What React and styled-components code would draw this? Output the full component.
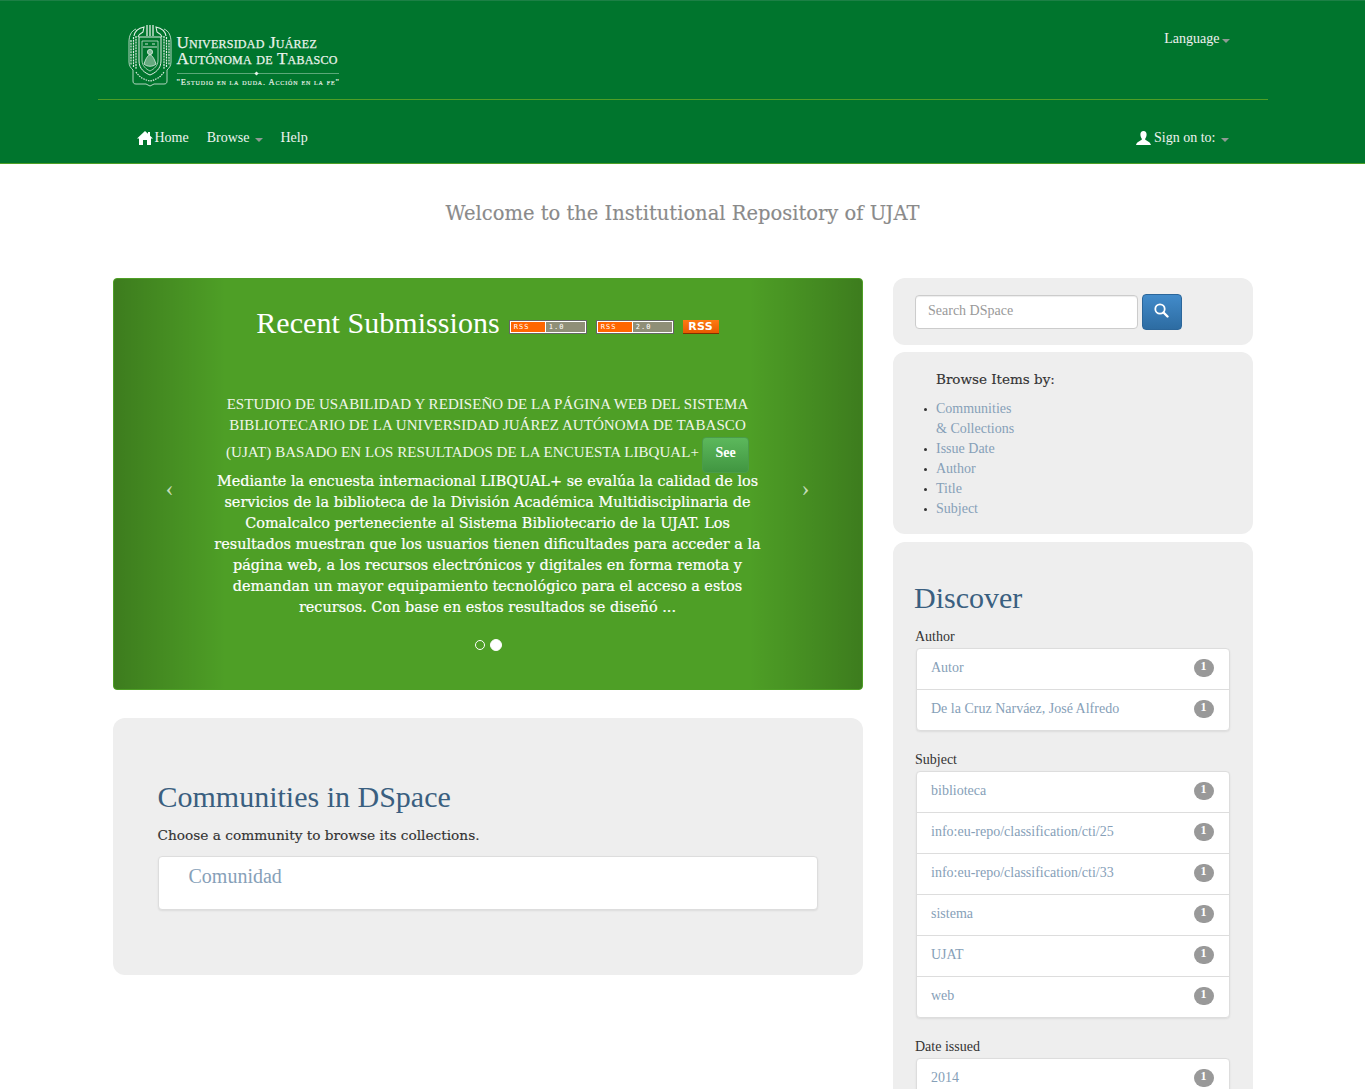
import React from "react";
import styled, { createGlobalStyle } from "styled-components";

const Global = createGlobalStyle`
  html, body { margin: 0; padding: 0; background: #fff; }
  body { font-family: "Liberation Serif", "Times New Roman", serif; font-size: 14px; line-height: 20px; color: #333; }
  * { box-sizing: border-box; }
`;
const slab = `"DejaVu Serif", serif`;

const Page = styled.div`height: 1089px; overflow: hidden;`;
const Header = styled.header`
  height: 164px; background: #00752d; border-top: 1px solid #1c8045; border-bottom: 1px solid #4e9f26;
`;
const HeaderInner = styled.div`width: 1170px; margin: 0 auto;`;
const TopRow = styled.div`
  height: 99px; padding: 24px 39px 0 30px; border-bottom: 1px solid #4e9f26;
  display: flex; justify-content: space-between; align-items: flex-start;
`;
const Logo = styled.div`display: flex; gap: 5px; align-items: flex-start; color: #eaf3ec;`;
const LogoText = styled.div`display: flex; flex-direction: column; padding-top: 10px; width: 162px;`;
const LogoLine = styled.div`
  font-family: "Liberation Serif", serif; font-variant: small-caps; font-size: 17px; line-height: 16px;
  letter-spacing: .22px; white-space: nowrap; font-weight: 400; -webkit-text-stroke: .25px #eaf3ec;
`;
const LogoRule = styled.div`
  height: 1px; background: #5aa878; margin: 6px 0 4px; position: relative;
  &::after { content: ""; position: absolute; left: 78px; top: -1px; width: 3px; height: 3px; background: #eaf3ec; transform: rotate(45deg); }
`;
const LogoTag = styled.div`
  font-family: "Liberation Serif", serif; font-variant: small-caps; font-size: 8.500px; line-height: 8px;
  letter-spacing: .85px; white-space: nowrap; font-weight: 400; -webkit-text-stroke: .15px #eaf3ec;
`;
const Language = styled.div`color: #f0f0f0; margin-top: 4px; margin-right: -1px; display: flex; align-items: center; gap: 2px;`;
const Caret = styled.span`
  display: inline-block; width: 0; height: 0; border-top: 4px solid #8f9a94;
  border-left: 4px solid transparent; border-right: 4px solid transparent; margin-top: 3px;
`;
const NavRow = styled.nav`
  height: 63px; padding: 13px 39px 0; display: flex; justify-content: space-between; align-items: center;
`;
const NavGroup = styled.div`display: flex; gap: 18px; align-items: center;`;
const NavItem = styled.a`color: #eef3ef; display: flex; align-items: center; gap: ${p => p.$gap || 2}px; white-space: nowrap;`;
const SignCaret = styled(Caret)`margin-left: 2px;`;

const Welcome = styled.h3`
  margin: 0; padding-top: 37px; height: 114px; text-align: center; font: 400 19.500px/26px ${slab}; color: #8a8a8a;
  -webkit-text-stroke: .15px #8a8a8a;
`;
const Main = styled.main`width: 1140px; margin: 0 auto; display: flex; gap: 30px; align-items: flex-start;`;
const LeftCol = styled.div`width: 750px; display: flex; flex-direction: column; gap: 28px;`;
const RightCol = styled.div`width: 360px; display: flex; flex-direction: column; gap: 7px;`;

const Carousel = styled.section`
  position: relative; height: 412px; background: #4e9f26; border: 1px solid #4e9f26; border-radius: 4px;
  color: #fff; overflow: hidden; text-align: center;
`;
const Control = styled.div`
  position: absolute; top: 0; bottom: 0; width: 15%; ${p => p.$side}: 0; display: flex; align-items: center; justify-content: center;
  padding-top: 8px; background: linear-gradient(to ${p => p.$side === "left" ? "right" : "left"}, rgba(0,0,0,.22), rgba(0,0,0,.0));
  font-size: 24px; color: #c4dcb8;
`;
const CarouselHead = styled.div`
  height: 87px; padding: 27px 0 0; display: flex; justify-content: center; align-items: flex-start; gap: 9px;
`;
const CarouselTitle = styled.h3`margin: 0; font: 400 30px/33px "Liberation Serif", serif; color: #fff; letter-spacing: .05px;`;
const Badge = styled.span`
  display: flex; width: 78px; height: 14px; margin-top: 14px; border: 1px solid #666; background: #fff;
  font: 400 7px/10px "DejaVu Sans Mono", monospace; letter-spacing: 1.100px; color: #fff; padding: 1px;
`;
const BadgeLeft = styled.span`width: 34px; background: #ff6600; text-align: left; padding-left: 3px;`;
const BadgeRight = styled.span`flex: 1; background: #8f8f77; border-left: 1px solid #fff; text-align: left; padding-left: 3px;`;
const RssBadge = styled.span`
  width: 36px; height: 14px; margin-top: 14px; background: linear-gradient(#ff7a12, #e85a00); border-bottom: 1px solid #803000;
  font: 700 11px/13px "DejaVu Sans", sans-serif; color: #fff; letter-spacing: .3px;
`;
const SlideBody = styled.div`width: 556px; margin: 0 auto; padding-top: 28px;`;
const SlideTitle = styled.div`font-size: 15px; line-height: 21px; color: #f0f6ea; letter-spacing: .06px;`;
const SeeLine = styled.div`display: flex; justify-content: center; align-items: flex-start; gap: 3px; height: 34px; margin-top: 1px; white-space: nowrap;`;
const SeeTitle = styled(SlideTitle)`padding-top: 5px;`;
const SeeBtn = styled.a`
  width: 47px; height: 36px; border-radius: 4px; background: linear-gradient(#5cb85c, #419641); border: 1px solid #4a9c4a;
  color: #fff; font-weight: 700; font-size: 14px; line-height: 29px;
`;
const SlideText = styled.p`margin: 0; padding-top: 0; font: 400 14.450px/21px ${slab}; color: #fff; -webkit-text-stroke: .2px #fff;`;
const Dots = styled.div`position: absolute; left: 1px; right: 0; top: 360px; display: flex; justify-content: center; align-items: center; gap: 5px;`;
const Dot = styled.span`
  width: ${p => p.$on ? 12 : 10}px; height: ${p => p.$on ? 12 : 10}px; border-radius: 50%; border: 1px solid #fff;
  background: ${p => p.$on ? "#fff" : "transparent"};
`;

const Well = styled.section`background: #eee; border-radius: 12px;`;
const CommWell = styled(Well)`height: 257px; padding: 60px 45px 0;`;
const BlueTitle = styled.h2`margin: 0; font: 400 30px/38px "Liberation Serif", serif; color: #3a5f80;`;
const Sub = styled.p`margin: 0; padding-top: 9px; font: 400 13.700px/20px ${slab}; color: #333; -webkit-text-stroke: .15px #333;`;
const CommPanel = styled.div`
  margin-top: 11px; height: 54px; background: #fff; border: 1px solid #ddd; border-radius: 4px; padding: 6px 30px;
  box-shadow: 0 1px 2px rgba(0,0,0,.08); font-size: 20px; line-height: 27px; color: #86a0b8;
`;
const SearchWell = styled(Well)`height: 67px; padding: 16px 22px; display: flex; gap: 4px; align-items: flex-start;`;
const Input = styled.input`
  width: 223px; height: 34px; margin-top: 1px; padding: 0 12px 2px 12.500px; border: 1px solid #ccc; border-radius: 4px; background: #fff;
  font: 14px "Liberation Serif", serif; box-shadow: inset 0 1px 1px rgba(0,0,0,.075);
  &::placeholder { color: #999; opacity: 1; }
`;
const SearchBtn = styled.button`
  width: 40px; height: 36px; border: 1px solid #2b669a; border-radius: 4px; background: linear-gradient(#428bca, #2d6ca2);
  display: flex; align-items: center; justify-content: center; padding: 0 0 3px 0;
`;
const BrowseWell = styled(Well)`height: 182px; padding: 17px 43.500px;`;
const BrowseTitle = styled.h4`margin: 0; font: 400 13.500px/20px ${slab}; color: #333; -webkit-text-stroke: .15px #333;`;
const BrowseList = styled.ul`margin: 10px 0 0; padding: 0; list-style: none;`;
const BrowseItem = styled.li`
  position: relative; color: #86a0b8;
  &::before { content: ""; position: absolute; left: -12px; top: 9px; width: 3px; height: 3px; border-radius: 50%; background: #333; }
`;
const DiscoverWell = styled(Well)`margin-top: 1px; padding: 37px 22.500px 0; height: 700px;`;
const DiscoverTitle = styled(BlueTitle)`margin-left: -1px; margin-bottom: 10px;`;
const FacetLabel = styled.div`margin-top: ${p => p.$first ? 0 : 19}px; line-height: 20px; font-size: 14px; color: #333;`;
const List = styled.ul`
  margin: 1px 0 0 0.500px; padding: 0; list-style: none; width: 314px; background: #fff; border: 1px solid #ddd; border-radius: 4px;
  box-shadow: 0 1px 2px rgba(0,0,0,.075);
`;
const Row = styled.li`
  height: ${p => p.$last ? 40 : 41}px; padding: 9px 15px 0 14.500px; display: flex; justify-content: space-between; align-items: flex-start;
  border-bottom: ${p => p.$last ? "none" : "1px solid #ddd"}; color: #86a0b8;
`;
const Count = styled.span`
  width: 20px; height: 18px; margin-top: 1px; border-radius: 10px; background: #999; color: #fff; font-weight: 700; font-size: 12px;
  line-height: 14px; text-align: center;
`;

const Home = () => (
  <svg width="16" height="14" viewBox="0 0 16 14"><path fill="#fff" d="M8 0 L11 2.800V1h2v3.700L16 7.500h-2V14h-4V9H6v5H2V7.500H0Z" /></svg>
);
const User = () => (
  <svg width="15" height="14" viewBox="0 0 15 14"><path fill="#fff" d="M7.500 0C5.400 0 4.400 1.500 4.400 3.500c0 1.700.6 3 1.300 3.900.3.600.2 1.200-.3 1.600C4 10 .8 10.700 0 14h15c-.8-3.300-4-4-5.400-5-.5-.4-.6-1-.3-1.600.7-.9 1.300-2.200 1.300-3.900C10.600 1.500 9.600 0 7.500 0Z" /></svg>
);
const SearchIcon = () => (
  <svg width="15" height="15" viewBox="0 0 15 15" fill="none" stroke="#fff"><circle cx="6" cy="6" r="4.700" strokeWidth="1.800" /><path d="M9.500 9.500 13.500 13.500" strokeWidth="2.400" strokeLinecap="round" /></svg>
);
const Crest = () => (
  <svg width="44" height="62" viewBox="0 0 44 62" fill="none" stroke="#dfeee4" strokeWidth="0.800">
    <path d="M8 4 C3 6 1 11 1 17 V37 C1 41 3 43 5 45 L5 56 C5 58 6 59 8 59 H18 L22 61 L26 59 H36 C38 59 39 58 39 56 L39 45 C41 43 43 41 43 37 V17 C43 11 41 6 36 4" />
    <path d="M3 15 V40 M5.500 12 V42 M8 11 V44 M36 11 V44 M38.500 12 V42 M41 15 V40" strokeWidth="1.200" strokeDasharray="2 .8" />
    <path d="M6 11 C7 5 11 3 16 2 L15 7 C13 8 11 9 10 12 M38 11 C37 5 33 3 28 2 L29 7 C31 8 33 9 34 12" strokeWidth="1.100" />
    <path d="M19 0 V11 M22 0 V11 M25 0 V11" strokeWidth="1.300" />
    <path d="M11 12 H33 V36 C33 44 27 48 22 50 C17 48 11 44 11 36 Z" strokeWidth="1" />
    <path d="M14 16 H30 V35 C30 41 26 44 22 46 C18 44 14 41 14 35 Z" strokeWidth="0.700" />
    <path d="M15 22 H29 M17 19 H20 M24 19 H27" strokeWidth="0.900" />
    <circle cx="22" cy="27" r="2.600" fill="#dfeee4" fillOpacity=".6" />
    <path d="M16 39 C18 33 20 30 22 30 C24 30 26 33 28 39 C25 42 19 42 16 39 Z" fill="#dfeee4" fillOpacity=".45" />
    <path d="M8 47 C12 53 17 55 22 56 C27 55 32 53 36 47" strokeWidth="1.200" strokeDasharray="1.500 1" />
  </svg>
);

const facets = [
  ["Author", ["Autor", "De la Cruz Narváez, José Alfredo"]],
  ["Subject", ["biblioteca", "info:eu-repo/classification/cti/25", "info:eu-repo/classification/cti/33", "sistema", "UJAT", "web"]],
  ["Date issued", ["2014"]],
];

export default function App() {
  return (
    <Page>
      <Global />
      <Header>
        <HeaderInner>
          <TopRow>
            <Logo>
              <Crest />
              <LogoText>
                <LogoLine>Universidad Juárez</LogoLine>
                <LogoLine>Autónoma de Tabasco</LogoLine>
                <LogoRule />
                <LogoTag>"Estudio en la duda. Acción en la fe"</LogoTag>
              </LogoText>
            </Logo>
            <Language>Language<Caret /></Language>
          </TopRow>
          <NavRow>
            <NavGroup>
              <NavItem><Home />Home</NavItem>
              <NavItem $gap={5}>Browse <Caret /></NavItem>
              <NavItem>Help</NavItem>
            </NavGroup>
            <NavItem $gap={3}><User />Sign on to:<SignCaret /></NavItem>
          </NavRow>
        </HeaderInner>
      </Header>
      <Welcome>Welcome to the Institutional Repository of UJAT</Welcome>
      <Main>
        <LeftCol>
          <Carousel>
            <Control $side="left">‹</Control>
            <Control $side="right">›</Control>
            <CarouselHead>
              <CarouselTitle>Recent Submissions</CarouselTitle>
              <Badge><BadgeLeft>RSS</BadgeLeft><BadgeRight>1.0</BadgeRight></Badge>
              <Badge><BadgeLeft>RSS</BadgeLeft><BadgeRight>2.0</BadgeRight></Badge>
              <RssBadge>RSS</RssBadge>
            </CarouselHead>
            <SlideBody>
              <SlideTitle>ESTUDIO DE USABILIDAD Y REDISEÑO DE LA PÁGINA WEB DEL SISTEMA BIBLIOTECARIO DE LA UNIVERSIDAD JUÁREZ AUTÓNOMA DE TABASCO</SlideTitle>
              <SeeLine>
                <SeeTitle as="span">(UJAT) BASADO EN LOS RESULTADOS DE LA ENCUESTA LIBQUAL+</SeeTitle>
                <SeeBtn>See</SeeBtn>
              </SeeLine>
              <SlideText>Mediante la encuesta internacional LIBQUAL+ se evalúa la calidad de los servicios de la biblioteca de la División Académica Multidisciplinaria de Comalcalco perteneciente al Sistema Bibliotecario de la UJAT. Los resultados muestran que los usuarios tienen dificultades para acceder a la página web, a los recursos electrónicos y digitales en forma remota y demandan un mayor equipamiento tecnológico para el acceso a estos recursos. Con base en estos resultados se diseñó ...</SlideText>
            </SlideBody>
            <Dots><Dot /><Dot $on /></Dots>
          </Carousel>
          <CommWell>
            <BlueTitle>Communities in DSpace</BlueTitle>
            <Sub>Choose a community to browse its collections.</Sub>
            <CommPanel>Comunidad</CommPanel>
          </CommWell>
        </LeftCol>
        <RightCol>
          <SearchWell>
            <Input placeholder="Search DSpace" />
            <SearchBtn aria-label="Search"><SearchIcon /></SearchBtn>
          </SearchWell>
          <BrowseWell>
            <BrowseTitle>Browse Items by:</BrowseTitle>
            <BrowseList>
              <BrowseItem>Communities<br />&amp; Collections</BrowseItem>
              <BrowseItem>Issue Date</BrowseItem>
              <BrowseItem>Author</BrowseItem>
              <BrowseItem>Title</BrowseItem>
              <BrowseItem>Subject</BrowseItem>
            </BrowseList>
          </BrowseWell>
          <DiscoverWell>
            <DiscoverTitle>Discover</DiscoverTitle>
            {facets.map(([label, items], i) => (
              <React.Fragment key={label}>
                <FacetLabel $first={i === 0}>{label}</FacetLabel>
                <List>
                  {items.map((it, j) => (
                    <Row key={it} $last={j === items.length - 1}>{it}<Count>1</Count></Row>
                  ))}
                </List>
              </React.Fragment>
            ))}
          </DiscoverWell>
        </RightCol>
      </Main>
    </Page>
  );
}
